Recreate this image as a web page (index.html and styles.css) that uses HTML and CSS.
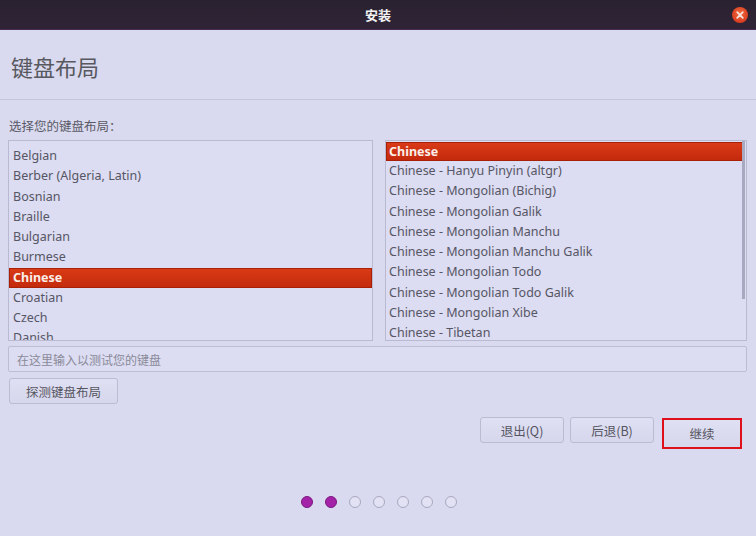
FILE: index.html
```html
<!DOCTYPE html>
<html>
<head>
<meta charset="utf-8">
<link rel="stylesheet" href="styles.css">
</head>
<body>
<div class="window">
  <div class="titlebar">
    <span class="title">安装</span>
    <span class="close"><svg width="16" height="16" viewBox="0 0 16 16"><defs><radialGradient id="cg" cx="0.5" cy="0.4" r="0.6"><stop offset="0" stop-color="#f06a3a"/><stop offset="1" stop-color="#d83a20"/></radialGradient></defs><circle cx="8" cy="8" r="8" fill="url(#cg)"/><path d="M5.2 5.2 L10.8 10.8 M10.8 5.2 L5.2 10.8" stroke="#f6e0dc" stroke-width="1.8" stroke-linecap="round"/></svg></span>
  </div>
  <div class="header">
    <h1 class="heading">键盘布局</h1>
  </div>
  <div class="main">
    <div class="label">选择您的键盘布局：</div>
    <div class="lists">
      <div class="list left">
        <div class="item">Belgian</div>
        <div class="item">Berber (Algeria, Latin)</div>
        <div class="item">Bosnian</div>
        <div class="item">Braille</div>
        <div class="item">Bulgarian</div>
        <div class="item">Burmese</div>
        <div class="item sel">Chinese</div>
        <div class="item">Croatian</div>
        <div class="item">Czech</div>
        <div class="item">Danish</div>
      </div>
      <div class="list right">
        <div class="scrollbar"></div>
        <div class="item sel">Chinese</div>
        <div class="item">Chinese - Hanyu Pinyin (altgr)</div>
        <div class="item">Chinese - Mongolian (Bichig)</div>
        <div class="item">Chinese - Mongolian Galik</div>
        <div class="item">Chinese - Mongolian Manchu</div>
        <div class="item">Chinese - Mongolian Manchu Galik</div>
        <div class="item">Chinese - Mongolian Todo</div>
        <div class="item">Chinese - Mongolian Todo Galik</div>
        <div class="item">Chinese - Mongolian Xibe</div>
        <div class="item">Chinese - Tibetan</div>
      </div>
    </div>
    <div class="testinput">在这里输入以测试您的键盘</div>
    <div class="detect-row"><span class="btn detect">探测键盘布局</span></div>
    <div class="actions">
      <span class="btn act">退出(Q)</span>
      <span class="btn act">后退(B)</span>
      <span class="btn act cont">继续</span>
    </div>
    <div class="dots">
      <span class="dot on"></span><span class="dot on"></span><span class="dot"></span><span class="dot"></span><span class="dot"></span><span class="dot"></span><span class="dot"></span>
    </div>
  </div>
</div>
</body>
</html>
```

FILE: styles.css
```css
* { box-sizing: border-box; }
html, body { margin: 0; padding: 0; }
body {
  width: 756px;
  height: 536px;
  overflow: hidden;
  background: #d9d9ef;
  font-family: "Noto Sans", "Noto Sans CJK SC", sans-serif;
  color: #4d4d5c;
}
.window { width: 756px; height: 536px; display: flex; flex-direction: column; }
.titlebar {
  height: 30px;
  background: linear-gradient(#2a2130, #2e2436);
  border-bottom: 1px solid #4a2a50;
  display: flex;
  align-items: center;
  justify-content: center;
  position: relative;
}
.title {
  color: #f2f2f2;
  font-family: "Noto Sans CJK SC", sans-serif;
  font-weight: 700;
  font-size: 13px;
}
.close { position: absolute; right: 8px; top: 7px; width: 16px; height: 16px; display: flex; }
.header {
  height: 70px;
  border-bottom: 1px solid #c4c4d8;
  display: flex;
  align-items: center;
  padding-left: 11px;
}
.heading {
  margin: 0;
  font-family: "Noto Sans CJK SC", sans-serif;
  font-weight: 400;
  font-size: 22px;
  color: #58585f;
  padding-top: 2px;
}
.main { padding: 0 9px 0 8px; display: flex; flex-direction: column; }
.label {
  margin-top: 16px;
  height: 19px;
  font-family: "Noto Sans CJK SC", sans-serif;
  font-size: 12.5px;
  color: #5a5a66;
  padding-left: 1px;
}
.lists { margin-top: 5px; display: flex; gap: 12px; height: 201px; }
.list {
  background: #dcdcf2;
  border: 1px solid #b9b9cf;
  overflow: hidden;
  position: relative;
}
.left { width: 365px; padding-top: 5px; }
.right { width: 362px; padding-top: 1px; }
.item {
  height: 20.3px;
  line-height: 20.3px;
  font-size: 12.5px;
  padding-left: 4px;
  color: #565664;
  white-space: nowrap;
}
.right .item { padding-left: 3px; }
.item.sel {
  background: linear-gradient(#d93a16, #c32a0c);
  color: #fbeee8;
  font-weight: 700;
  border: 1px solid #a82008;
  line-height: 18px;
  padding-left: 3px;
}
.right .item.sel { margin-right: 3px; height: 19px; padding-left: 2px; }
.left .item.sel { height: 20px; }
.scrollbar {
  position: absolute;
  right: 1px;
  top: 0;
  width: 3px;
  height: 158px;
  background: #a8a8c0;
}
.testinput {
  margin-top: 5px;
  height: 26px;
  width: 739px;
  border: 1px solid #bdbdd2;
  background: #dcdcf2;
  border-radius: 2px;
  font-family: "Noto Sans CJK SC", sans-serif;
  font-size: 12px;
  color: #8a8a98;
  display: flex;
  align-items: center;
  padding-left: 8px;
}
.detect-row { margin-top: 6px; display: flex; }
.btn {
  display: flex;
  align-items: center;
  justify-content: center;
  border: 1px solid #bcbcd0;
  border-radius: 3px;
  background: linear-gradient(#e0e0f4, #d6d6ec);
  font-family: "Noto Sans CJK SC", sans-serif;
  font-size: 12.5px;
  color: #55555f;
}
.detect { width: 109px; height: 26px; margin-left: 1px; }
.actions { margin-top: 13px; display: flex; justify-content: flex-end; gap: 6px; padding-right: 5px; }
.act { width: 84px; height: 26px; }
.cont {
  width: 80px;
  height: 31px;
  border: 2px solid #e0101a;
  border-radius: 0;
  margin-left: 2px;
  margin-top: 1px;
}
.dots { margin-top: 47px; display: flex; justify-content: center; gap: 12px; padding-left: 2px; }
.dot {
  width: 12px;
  height: 12px;
  border-radius: 50%;
  border: 1.5px solid #a8a8c0;
  background: #e2e2f4;
}
.dot.on { background: #a422a8; border-color: #7a1880; }
```
